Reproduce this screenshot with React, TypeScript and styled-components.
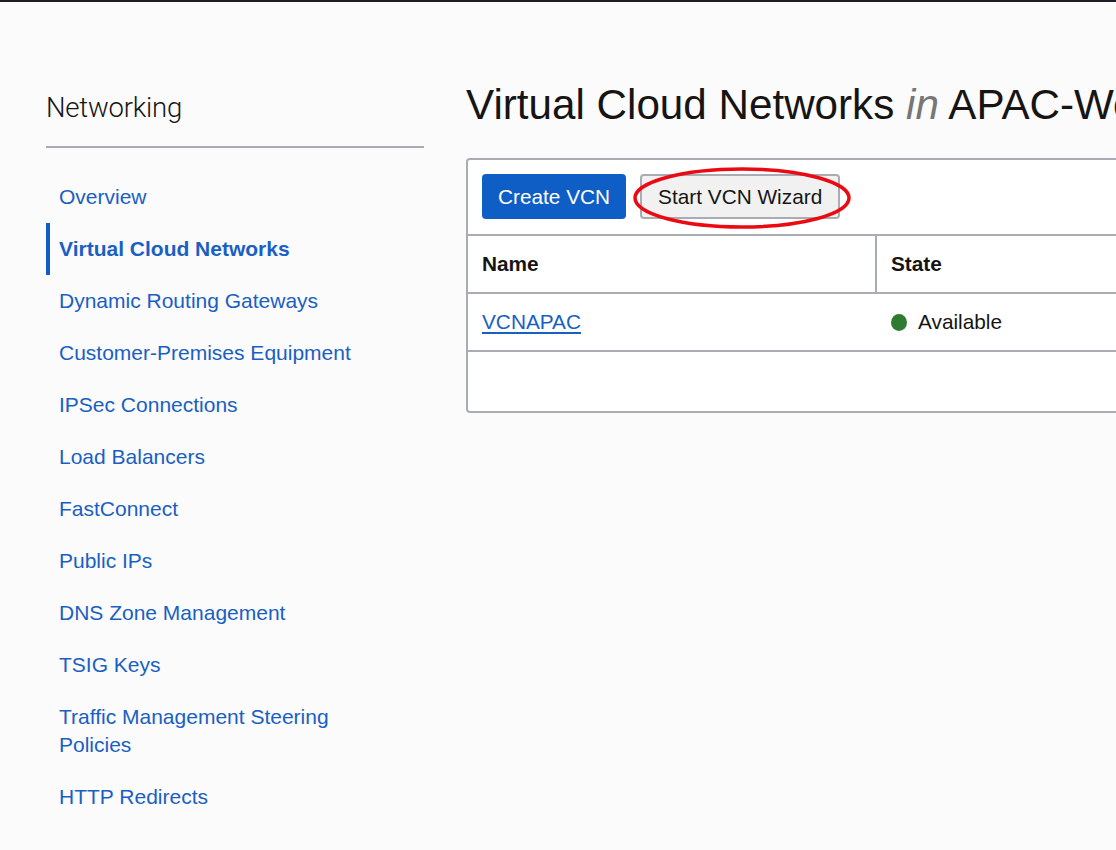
import React from "react";
import styled, { createGlobalStyle } from "styled-components";

const GlobalStyle = createGlobalStyle`
  html, body {
    margin: 0;
    padding: 0;
    background: #fbfbfb;
    overflow: hidden;
  }
  body {
    font-family: "Liberation Sans", Arial, Helvetica, sans-serif;
    color: #161513;
  }
  * { box-sizing: border-box; }
`;

const TopBar = styled.div`
  height: 2px;
  background: #1c1f26;
`;

const Page = styled.div`
  display: flex;
  align-items: flex-start;
  gap: 42px;
  padding: 79px 0 0 46px;
  width: 1600px;
  height: 848px;
`;

const Sidebar = styled.aside`
  flex: 0 0 378px;
  padding-top: 11px;
`;

const SideTitle = styled.h2`
  margin: 0;
  font-family: Roboto, "Liberation Sans", sans-serif;
  font-weight: 300;
  font-size: 27.5px;
  line-height: 32px;
  color: #161513;
  letter-spacing: -0.2px;
`;

const Divider = styled.hr`
  margin: 22px 0 23px;
  border: 0;
  height: 2px;
  background: #a9acb2;
`;

const NavList = styled.ul`
  list-style: none;
  margin: 0;
  padding: 0;
`;

const NavItem = styled.li<{ $active?: boolean }>`
  border-left: 4px solid ${(p) => (p.$active ? "#0f5ec6" : "transparent")};
  padding: 12px 40px 12px 9px;
  font-size: 21px;
  line-height: 28px;
  color: #1a5fc4;
  font-weight: ${(p) => (p.$active ? 700 : 400)};
`;

const Main = styled.main`
  flex: 0 0 900px;
`;

const Title = styled.h1`
  margin: 0 0 29px;
  font-weight: 400;
  font-size: 42.2px;
  line-height: 48px;
  white-space: nowrap;
  color: #161513;
`;

const In = styled.em`
  color: #767676;
  font-style: italic;
`;

const Panel = styled.section`
  border: 2px solid #a9acb2;
  border-radius: 4px;
  background: #ffffff;
  width: 800px;
`;

const Toolbar = styled.div`
  position: relative;
  display: flex;
  gap: 14px;
  padding: 14px 14px 15px;
  border-bottom: 2px solid #a9acb2;
`;

const Button = styled.button<{ $primary?: boolean }>`
  height: 45px;
  padding: 0 16px;
  font-family: "Liberation Sans", Arial, sans-serif;
  font-size: 20.8px;
  border-radius: 4px;
  border: ${(p) => (p.$primary ? "none" : "2px solid #a9acb2")};
  background: ${(p) => (p.$primary ? "#0f5ec6" : "#f1f1f1")};
  color: ${(p) => (p.$primary ? "#ffffff" : "#161513")};
  cursor: pointer;
`;

const Annotation = styled.svg`
  position: absolute;
  left: 163px;
  top: 5px;
  width: 222px;
  height: 66px;
  pointer-events: none;
`;

const Row = styled.div<{ $height: number }>`
  display: grid;
  grid-template-columns: 409px 1fr;
  height: ${(p) => p.$height}px;
  border-bottom: 2px solid #a9acb2;
  &:last-child {
    border-bottom: none;
  }
`;

const Cell = styled.div<{ $head?: boolean; $divider?: boolean }>`
  display: flex;
  align-items: center;
  gap: 11px;
  padding: 0 14px;
  font-size: 20.8px;
  font-weight: ${(p) => (p.$head ? 700 : 400)};
  border-right: ${(p) => (p.$divider ? "2px solid #a9acb2" : "none")};
`;

const Link = styled.a`
  color: #1a5fc4;
  text-decoration: underline;
  text-underline-offset: 3px;
`;

const Dot = styled.span`
  width: 16px;
  height: 17px;
  border-radius: 50%;
  background: #2e7b31;
  flex: 0 0 auto;
`;

const navItems = [
  "Overview",
  "Virtual Cloud Networks",
  "Dynamic Routing Gateways",
  "Customer-Premises Equipment",
  "IPSec Connections",
  "Load Balancers",
  "FastConnect",
  "Public IPs",
  "DNS Zone Management",
  "TSIG Keys",
  "Traffic Management Steering Policies",
  "HTTP Redirects",
];

export default function App() {
  return (
    <>
      <GlobalStyle />
      <TopBar />
      <Page>
        <Sidebar>
          <SideTitle>Networking</SideTitle>
          <Divider />
          <NavList>
            {navItems.map((item) => (
              <NavItem key={item} $active={item === "Virtual Cloud Networks"}>
                {item}
              </NavItem>
            ))}
          </NavList>
        </Sidebar>
        <Main>
          <Title>
            Virtual Cloud Networks <In>in</In> APAC-Workshop Compartment
          </Title>
          <Panel>
            <Toolbar>
              <Button $primary>Create VCN</Button>
              <Button>Start VCN Wizard</Button>
              <Annotation viewBox="0 0 222 66">
                <ellipse
                  cx="111"
                  cy="33"
                  rx="107"
                  ry="29"
                  fill="none"
                  stroke="#ec0a12"
                  strokeWidth="3.5"
                />
              </Annotation>
            </Toolbar>
            <Row $height={58}>
              <Cell $head $divider>Name</Cell>
              <Cell $head>State</Cell>
            </Row>
            <Row $height={58}>
              <Cell>
                <Link href="#">VCNAPAC</Link>
              </Cell>
              <Cell>
                <Dot />
                Available
              </Cell>
            </Row>
            <Row $height={59}>
              <Cell />
              <Cell />
            </Row>
          </Panel>
        </Main>
      </Page>
    </>
  );
}
